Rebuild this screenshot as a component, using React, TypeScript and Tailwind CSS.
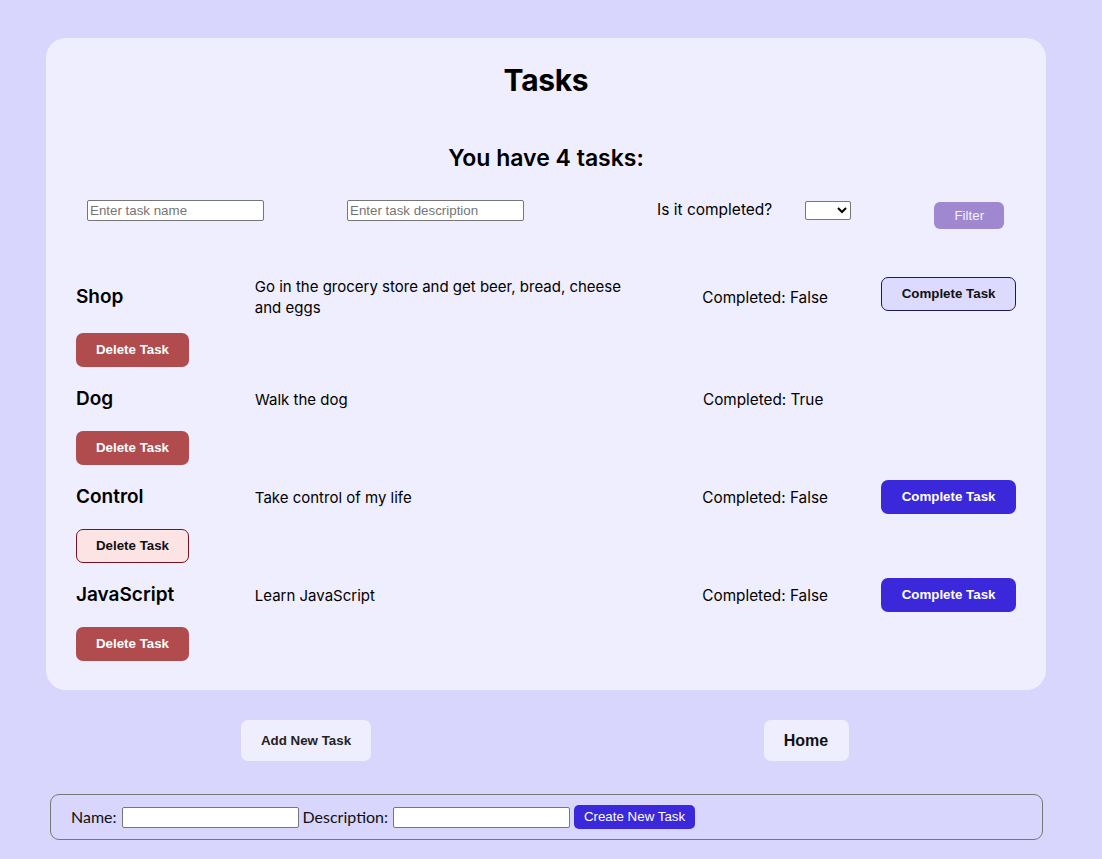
import React from "react";

const tasks = [
  { name: "Shop", desc: "Go in the grocery store and get beer, bread, cheese and eggs", done: false, light: true, delLight: false },
  { name: "Dog", desc: "Walk the dog", done: true, light: false, delLight: false },
  { name: "Control", desc: "Take control of my life", done: false, light: false, delLight: true },
  { name: "JavaScript", desc: "Learn JavaScript", done: false, light: false, delLight: false },
];

const head = { fontFamily: "Inter, 'Noto Sans', sans-serif" };
const arial = { fontFamily: "'Liberation Sans', Arial, sans-serif" };

export default function App() {
  return (
    <div className="min-h-[859px] w-full bg-[#d8d6fd] pt-[38px] pb-[19px]" style={head}>
      <div className="ml-[46px] w-[1000px] rounded-[20px] bg-[#efeefe] px-[30px] pt-[20px] pb-[29px] text-black">
        <h1 className="text-center text-[30px] font-bold leading-[44px] tracking-[-0.3px]">Tasks</h1>
        <h2 className="mt-[41px] text-center text-[23px] font-semibold leading-[30px]">You have 4 tasks:</h2>
        <div className="mt-[26px] flex h-[32px] items-start">
          <input
            placeholder="Enter task name"
            className="ml-[11px] mt-[1px] h-[21px] w-[177px] rounded-[2px] border border-[#767676] bg-white px-[2px] text-[13.33px] placeholder:text-[#757575]"
            style={arial}
          />
          <input
            placeholder="Enter task description"
            className="ml-[83px] mt-[1px] h-[21px] w-[177px] rounded-[2px] border border-[#767676] bg-white px-[2px] text-[13.33px] placeholder:text-[#757575]"
            style={arial}
          />
          <span className="ml-[133px] text-[15.5px] leading-[22px]">Is it completed?</span>
          <select className="ml-[33px] mt-[2px] h-[19px] w-[46px] rounded-[2px] border border-[#767676] bg-white text-[13.33px]" style={arial}>
            <option></option>
          </select>
          <button
            className="ml-[83px] mt-[3px] h-[27px] w-[70px] rounded-[6px] bg-[#9f88d0] text-[13.33px] text-[#f3f0ff]"
            style={arial}
          >
            Filter
          </button>
        </div>
        <div className="mt-[45px] flex flex-col">
          {tasks.map((t, i) => (
            <div key={t.name} className={i > 0 ? "mt-[15px]" : ""}>
              <div className="flex min-h-[34px] items-center">
                <div className="w-[179px] text-[19px] font-semibold leading-[24px]">{t.name}</div>
                <div className="w-[390px] text-[15px] leading-[21px]">{t.desc}</div>
                <div className="ml-[58px] w-[179px] text-[15.3px] leading-[21px]">
                  Completed: {t.done ? "True" : "False"}
                </div>
                {!t.done &&
                  (t.light ? (
                    <button
                      className="-mt-[6px] h-[34px] w-[135px] rounded-[7px] border border-[#1c1a5e] bg-[#dcdafd] text-[13.33px] font-bold text-[#111]"
                      style={arial}
                    >
                      Complete Task
                    </button>
                  ) : (
                    <button
                      className="h-[34px] w-[135px] rounded-[7px] bg-[#3b28db] text-[13.33px] font-bold text-white"
                      style={arial}
                    >
                      Complete Task
                    </button>
                  ))}
              </div>
              <button
                className={
                  t.delLight
                    ? "mt-[15px] h-[34px] w-[113px] rounded-[7px] border border-[#7a1222] bg-[#fde4e4] text-[13.33px] font-bold text-[#111]"
                    : "mt-[15px] h-[34px] w-[113px] rounded-[7px] bg-[#b04b4e] text-[13.33px] font-bold text-white"
                }
                style={arial}
              >
                Delete Task
              </button>
            </div>
          ))}
        </div>
      </div>
      <div className="ml-[56px] mt-[30px] grid w-[1000px] grid-cols-2">
        <div className="flex justify-center">
          <button className="h-[41px] w-[130px] rounded-[7px] bg-[#efeefe] text-[13.33px] font-bold text-[#222]" style={arial}>
            Add New Task
          </button>
        </div>
        <div className="flex justify-center">
          <button className="h-[41px] w-[85px] rounded-[7px] bg-[#efeefe] text-[16px] font-bold text-[#111]" style={arial}>
            Home
          </button>
        </div>
      </div>
      <div
        className="ml-[50px] mt-[33px] flex h-[46px] w-[993px] items-center rounded-[9px] border border-[#777] pl-[20px] text-[16px] text-[#111]"
        style={{ fontFamily: "Lato, 'Noto Sans', sans-serif" }}
      >
        <span>Name:</span>
        <input className="ml-[5px] h-[21px] w-[177px] rounded-[2px] border border-[#767676] bg-white px-[2px] text-[13.33px]" style={arial} />
        <span className="ml-[4px]">Description:</span>
        <input className="ml-[5px] h-[21px] w-[177px] rounded-[2px] border border-[#767676] bg-white px-[2px] text-[13.33px]" style={arial} />
        <button className="ml-[4px] h-[24px] w-[121px] rounded-[5px] bg-[#3b28db] text-[13.33px] text-white" style={arial}>
          Create New Task
        </button>
      </div>
    </div>
  );
}
